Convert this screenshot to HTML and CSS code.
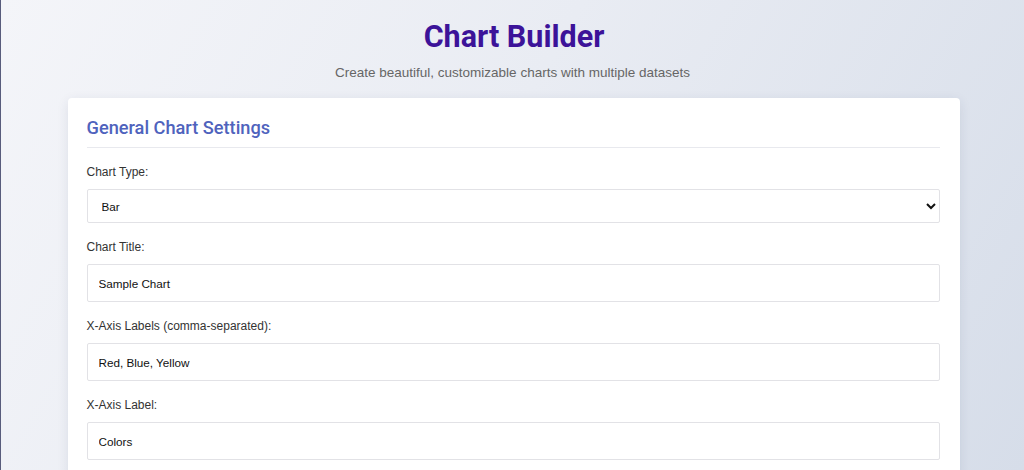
FILE: index.html
```html
<!DOCTYPE html>
<html lang="en">
<head>
<meta charset="utf-8">
<title>Chart Builder</title>
<link rel="stylesheet" href="styles.css">
</head>
<body>
<div class="page">
  <header class="header">
    <h1 class="title">Chart Builder</h1>
    <p class="subtitle">Create beautiful, customizable charts with multiple datasets</p>
  </header>
  <section class="card">
    <h2 class="card-title">General Chart Settings</h2>
    <div class="field">
      <label class="label" for="type">Chart Type:</label>
      <select class="control select" id="type">
        <option>Bar</option>
        <option>Line</option>
        <option>Pie</option>
      </select>
    </div>
    <div class="field">
      <label class="label" for="title">Chart Title:</label>
      <input class="control input" id="title" type="text" value="Sample Chart">
    </div>
    <div class="field">
      <label class="label" for="labels">X-Axis Labels (comma-separated):</label>
      <input class="control input" id="labels" type="text" value="Red, Blue, Yellow">
    </div>
    <div class="field">
      <label class="label" for="xlabel">X-Axis Label:</label>
      <input class="control input" id="xlabel" type="text" value="Colors">
    </div>
  </section>
</div>
</body>
</html>
```
FILE: styles.css
```css
html {
  margin: 0;
  min-height: 100%;
  background: linear-gradient(120deg, #f4f5f9 0%, #e9ecf3 45%, #d6dde9 100%);
  background-attachment: fixed;
}

body {
  margin: 0;
  min-height: 100vh;
  border-left: 1px solid #585c7c;
  font-family: "Liberation Sans", Arial, sans-serif;
  color: #333;
}

.page {
  padding: 18px 0 40px;
}

.header {
  text-align: center;
}

.title {
  margin: 0;
  padding-left: 3px;
  font-family: Roboto, "Liberation Sans", sans-serif;
  font-weight: 700;
  font-size: 30.5px;
  line-height: 38px;
  color: #3c1399;
}

.subtitle {
  margin: 9px 0 0;
  font-size: 13.5px;
  line-height: 16px;
  color: #666;
}

.card {
  width: 853px;
  margin: 17px 0 0 calc(50% - 445px);
  padding: 19px 20px 20px 19px;
  background: #fff;
  border-radius: 4px;
  box-shadow: 0 3px 12px rgba(40, 50, 90, 0.1);
}

.card-title {
  margin: 0 0 17px;
  padding-bottom: 8px;
  border-bottom: 1px solid #e8e9ee;
  font-family: Roboto, "Liberation Sans", sans-serif;
  font-weight: 500;
  font-size: 18.2px;
  line-height: 22px;
  color: #4f63bd;
}

.field {
  margin-bottom: 17px;
}

.label {
  display: block;
  margin-bottom: 9px;
  font-size: 12px;
  line-height: 15px;
  color: #333;
}

.control {
  display: block;
  box-sizing: border-box;
  width: 100%;
  margin: 0;
  border: 1px solid #e2e2e6;
  border-radius: 2px;
  background: #fff;
  font-family: "Liberation Sans", Arial, sans-serif;
  font-size: 11.7px;
  color: #111;
}

.select {
  height: 34px;
  padding: 0 8px 0 10px;
}

.input {
  height: 38px;
  padding: 0 11px;
}
```
